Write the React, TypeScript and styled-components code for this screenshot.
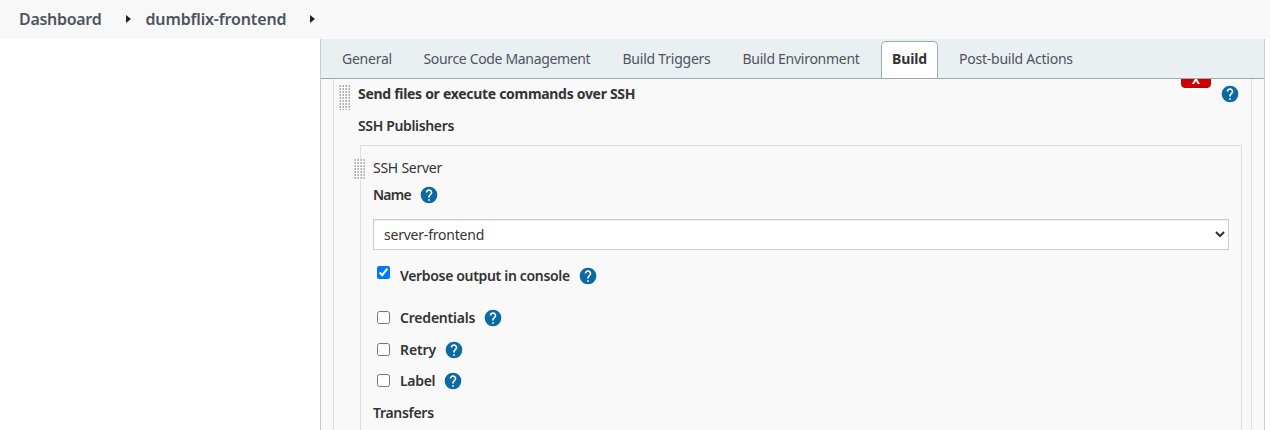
import React from 'react';
import styled, { createGlobalStyle } from 'styled-components';

const Global = createGlobalStyle`
  * { box-sizing: border-box; }
  body {
    margin: 0;
    background: #fff;
    color: #333;
    font: 14px "Noto Sans", sans-serif;
    overflow: hidden;
  }
`;

const Page = styled.div`
  height: 430px;
  display: flex;
  flex-direction: column;
  overflow: hidden;
`;

const Breadcrumbs = styled.nav`
  flex: none;
  height: 39px;
  padding: 0 0 2px 19px;
  display: flex;
  align-items: center;
  background: #f8f8f8;
`;

const Crumb = styled.a<{ $width: number; $track: number }>`
  width: ${p => p.$width}px;
  letter-spacing: ${p => p.$track}px;
  font-size: 16px;
  font-weight: 600;
  line-height: 36px;
  white-space: nowrap;
  color: #4d545d;
`;

const Arrow = styled.svg`
  flex: none;
  width: 5px;
  height: 8px;
  margin: 0 15px 0 24px;
  fill: #222;
`;

const Main = styled.main`
  flex: 1;
  min-height: 0;
  margin: 0 5px 0 320px;
  display: flex;
  flex-direction: column;
  border: solid #ccc;
  border-width: 0 1px;
  background: #f9f9f9;
`;

const TabBar = styled.div`
  flex: none;
  height: 40px;
  padding: 2px 0 0 10px;
  display: flex;
  gap: 10px;
  background: #eaeff2;
  border-bottom: 1px solid #98aab3;
`;

const Tab = styled.div<{ $width: number; $track: number; $active?: boolean }>`
  width: ${p => p.$width + 22}px;
  padding: 0 10px;
  border: 1px solid ${p => (p.$active ? '#98aab3' : 'transparent')};
  border-bottom: 0;
  border-radius: 5px 5px 0 0;
  background: ${p => (p.$active ? '#fff' : 'transparent')};
  color: ${p => (p.$active ? '#333' : '#4d545d')};
  font-weight: ${p => (p.$active ? 700 : 400)};
  letter-spacing: ${p => p.$track}px;
  line-height: 34px;
  white-space: nowrap;
`;

const Content = styled.div`
  flex: 1;
  min-height: 0;
  padding: 0 12px;
  overflow: hidden;
`;

const BuildStep = styled.section`
  position: relative;
  height: 100%;
  padding: 0 9px 0 24px;
  display: flex;
  flex-direction: column;
  border: solid #ddd;
  border-width: 0 1px;
`;

const Row = styled.div<{ $height: number; $gap?: number }>`
  flex: none;
  height: ${p => p.$height}px;
  margin-top: ${p => p.$gap ?? 0}px;
  display: flex;
  align-items: center;
`;

const Label = styled.span<{ $width?: number; $weight?: number; $track?: number }>`
  width: ${p => (p.$width ? `${p.$width}px` : 'auto')};
  font-weight: ${p => p.$weight ?? 600};
  letter-spacing: ${p => p.$track ?? 0}px;
  line-height: 20px;
  white-space: nowrap;
`;

const HelpIcon = styled.svg<{ $end?: boolean }>`
  flex: none;
  width: 20px;
  height: 20px;
  margin: ${p => (p.$end ? '0 2px 0 auto' : '0 0 0 8px')};
`;

const Help = ({ end }: { end?: boolean }) => (
  <HelpIcon viewBox="0 0 24 24" $end={end}>
    <circle cx="12" cy="12" r="10" fill="#0b6aa2" />
    <path
      fill="#fff"
      d="M13 19h-2v-2h2v2zm2.07-7.75l-.9.92C13.45 12.9 13 13.5 13 15h-2v-.5c0-1.1.45-2.1 1.17-2.83l1.24-1.26c.37-.36.59-.86.59-1.41 0-1.1-.9-2-2-2s-2 .9-2 2H8c0-2.21 1.79-4 4-4s4 1.79 4 4c0 .88-.36 1.68-.93 2.25z"
    />
  </HelpIcon>
);

const Grip = styled.div<{ $left: number; $top: number; $height: number }>`
  position: absolute;
  left: ${p => p.$left}px;
  top: ${p => p.$top}px;
  width: 12px;
  height: ${p => p.$height}px;
  background:
    linear-gradient(90deg, #fff 1px, transparent 1px) -1px -1px / 3px 3px,
    linear-gradient(#fff 1px, transparent 1px) -1px -1px / 3px 3px,
    linear-gradient(90deg, #d0d0d0 2px, #b0b0b0 2px) -1px -1px / 3px 3px;
`;

const DeleteButton = styled.button`
  position: absolute;
  top: -13px;
  right: 40px;
  width: 30px;
  height: 22px;
  padding: 0;
  border: 1px solid #b80000;
  border-radius: 4px;
  background: #c00;
  color: #fff;
  font: 700 12px/26px "Noto Sans", sans-serif;
`;

const ServerBox = styled.div`
  position: relative;
  flex: 1;
  min-height: 0;
  margin: 2px 0 0 2px;
  padding: 8px 12px 0;
  border: solid #ddd;
  border-width: 1px 1px 0;
`;

const Select = styled.select`
  display: block;
  width: 100%;
  height: 31px;
  margin-top: 11px;
  padding: 0 0 0 6px;
  border: 1px solid #ccc;
  border-radius: 0;
  box-shadow: inset 0 1px 1px rgba(0, 0, 0, 0.07);
  background-color: #fff;
  color: #333;
  font: 14px "Noto Sans", sans-serif;
  letter-spacing: -0.22px;
`;

const Checkbox = styled.input<{ $lift: number }>`
  flex: none;
  width: 13px;
  height: 13px;
  margin: 0 10px ${p => p.$lift}px 4px;
`;

const tabs = [
  { name: 'General', width: 49.5, track: -0.25 },
  { name: 'Source Code Management', width: 167, track: -0.34 },
  { name: 'Build Triggers', width: 88, track: -0.23 },
  { name: 'Build Environment', width: 117.5, track: -0.27 },
  { name: 'Build', width: 35, track: -0.1, active: true },
  { name: 'Post-build Actions', width: 115, track: -0.24 },
];

const options = [
  { name: 'Verbose output in console', width: 170, height: 32, gap: 10, lift: 7, track: -0.33, checked: true },
  { name: 'Credentials', width: 75, height: 32, gap: 10, lift: 1, track: -0.2 },
  { name: 'Retry', width: 36, height: 32, gap: 0, lift: 1, track: -0.1 },
  { name: 'Label', width: 35, height: 30, gap: 0, lift: 1, track: -0.3 },
];

export default function App() {
  return (
    <Page>
      <Global />
      <Breadcrumbs>
        <Crumb $width={82.5} $track={-0.3}>Dashboard</Crumb>
        <Arrow viewBox="0 0 5 8"><path d="M0 0l5 4-5 4z" /></Arrow>
        <Crumb $width={140} $track={-0.15}>dumbflix-frontend</Crumb>
        <Arrow viewBox="0 0 5 8"><path d="M0 0l5 4-5 4z" /></Arrow>
      </Breadcrumbs>
      <Main>
        <TabBar>
          {tabs.map(t => (
            <Tab key={t.name} $width={t.width} $track={t.track} $active={t.active}>{t.name}</Tab>
          ))}
        </TabBar>
        <Content>
          <BuildStep>
            <Grip $left={5} $top={6} $height={25} />
            <DeleteButton>X</DeleteButton>
            <Row $height={30}>
              <Label $weight={700} $track={-0.3}>Send files or execute commands over SSH</Label>
              <Help end />
            </Row>
            <Row $height={34}>
              <Label $track={-0.35}>SSH Publishers</Label>
            </Row>
            <ServerBox>
              <Grip $left={-7} $top={13} $height={21} />
              <Row $height={28}>
                <Label $weight={400} $track={-0.25}>SSH Server</Label>
              </Row>
              <Row $height={26}>
                <Label $width={38} $track={-0.75}>Name</Label>
                <Help />
              </Row>
              <Select defaultValue="server-frontend">
                <option>server-frontend</option>
              </Select>
              {options.map(o => (
                <Row key={o.name} $height={o.height} $gap={o.gap}>
                  <Checkbox type="checkbox" defaultChecked={o.checked} $lift={o.lift} />
                  <Label $width={o.width} $track={o.track}>{o.name}</Label>
                  <Help />
                </Row>
              ))}
              <Row $height={34}>
                <Label $track={-0.3}>Transfers</Label>
              </Row>
            </ServerBox>
          </BuildStep>
        </Content>
      </Main>
    </Page>
  );
}
